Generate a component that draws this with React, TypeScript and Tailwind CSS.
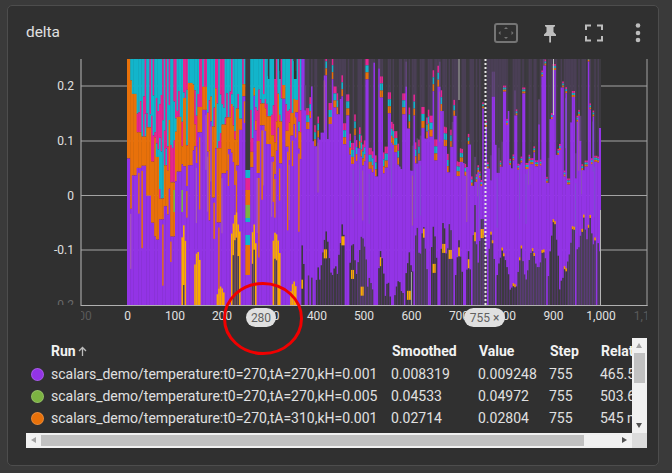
import React from "react";

const P = "#9334e6", PK = "#e52592", CY = "#12b5cb", OR = "#e8710a", YE = "#f9ab00", GR = "#7cb342", D1 = "#4a3f55", D2 = "#3c3a3f";

type R = [number, number, number, number, string];

function rng(seed: number) {
  return () => {
    seed |= 0; seed = (seed + 0x6d2b79f5) | 0;
    let t = Math.imul(seed ^ (seed >>> 15), 1 | seed);
    t = (t + Math.imul(t ^ (t >>> 7), 61 | t)) ^ t;
    return ((t ^ (t >>> 14)) >>> 0) / 4294967296;
  };
}

function lerp(pts: number[][], x: number) {
  for (let i = 1; i < pts.length; i++) {
    if (x <= pts[i][0]) {
      const [a, b] = pts[i - 1], [c, d] = pts[i];
      return b + ((d - b) * (x - a)) / (c - a);
    }
  }
  return pts[pts.length - 1][1];
}

const spikes = [[183, 222, 3], [197, 245, 3.500], [220, 285, 4], [235, 205, 5], [253, 218, 2.500], [275, 224, 4], [293, 280, 3]];

function build(): R[] {
  const r = rng(755);
  const out: R[] = [];
  const T = 59, B = 305;
  const add = (x: number, y0: number, y1: number, c: string, w = 2) => {
    const a = Math.max(T, y0), b = Math.min(B, y1);
    if (b > a) out.push([x, a, w, b - a, c]);
  };
  const dark: { c: number; top: number; hw: number; col: string; yy: number }[] = [];
  for (let c = 300; c < 602; c += 5 + r() * 7) {
    const env = lerp([[300, 235], [340, 225], [400, 250], [470, 215], [500, 245], [545, 235], [600, 215]], c);
    dark.push({ c, top: env + (r() - 0.4) * 65, hw: 2 + r() * (c > 490 ? 6 : 3.5), col: r() < 0.6 ? D1 : D2, yy: 225 + r() * 72 });
  }
  let held = 0, heldTop = 0, heldCool = 0, heldOrange = 0;
  for (let x = 127; x < 600; x += 1.6) {
    if (x >= 245 && x < 250) {
      add(x, T, 170, D2); add(x, 170, 178, CY); add(x, 178, 190, PK); add(x, 190, 205, OR);
      add(x, 205, 218, GR); add(x, 218, 222, CY); add(x, 222, 235, P); add(x, 235, 245, CY);
      add(x, 245, 275, OR); add(x, 275, B, P);
      continue;
    }
    if (x < 300) {
      if (held <= 0) {
        heldCool = lerp([[127, 80], [135, 130], [150, 170], [165, 170], [175, 125], [190, 115], [250, 118], [300, 100]], x) + (r() - 0.5) * 75;
        heldOrange = heldCool + lerp([[127, 105], [135, 90], [150, 65], [165, 55], [178, 45], [195, 50], [250, 32], [300, 20]], x) * (0.25 + r() * 1.5);
        held = 1 + Math.floor(r() * 2.500);
      }
      held--;
      const cool = heldCool, orange = heldOrange;
      let y = T;
      if (x > 255 && r() < 0.2) { add(x, T, T + r() * 25, D2); y = T + 20; }
      let lastPink = x > 140 && r() < 0.4;
      while (y < cool) {
        const h = 30 + r() * 60;
        add(x, y, Math.min(y + h, cool), lastPink ? PK : CY);
        y += h; lastPink = !lastPink;
      }
      add(x, cool, orange, OR);
      add(x, orange, B, P);
      if (r() < 0.14) add(x, orange + 5, orange + 25 + r() * 60, OR, 1.5);
      else if (r() < 0.1) add(x, orange + 5, orange + 60, "#a85bb0", 1.2);
      if (x > 150 && x < 185 && r() < 0.1) add(x, 190, 212, GR);
      for (const [c, top, hw] of spikes) {
        const d = Math.abs(x - c) / hw;
        if (d < 1) {
          const tp = top + d * (B - top) * 0.3 + r() * 6;
          add(x, tp, B, YE);
          if (d < 0.55 && c !== 183 && c !== 197) add(x, tp + 22 + d * 20, B, D1);
          else if (c === 183 && d < 0.4) add(x, 285, B, D1);
        }
      }
    } else {
      const u = Math.min(1, Math.max(0, (x - 440) / 40));
      const base = lerp([[300, 135], [350, 160], [450, 168], [490, 170], [600, 168]], x) + Math.sin(x * 0.07) * 9;
      if (held <= 0) {
        const s = r();
        heldTop = s < 0.6 ? base - Math.pow(r(), 1.2) * (base - 60) : base + (r() - 0.3) * 14;
        held = 1 + Math.floor(r() * 1.700);
      }
      held--;
      const top = heldTop;
      add(x, T, top, r() < 0.62 ? D1 : D2);
      const ch = 7 - 5 * u;
      if (r() < 0.7) {
        add(x, top - ch * 3, top - ch * 2, PK);
        add(x, top - ch * 2, top - ch, CY);
        add(x, top - ch, top, OR);
      } else if (r() < 0.5) {
        add(x, top - 25, top, "#5f4478");
      }
      if (x > 430 && top > 160 && r() < 0.1) add(x, top, top + 24, GR);
      add(x, top, B, P);
      if (r() < 0.14) add(x, top + 5, top + 55, r() < 0.5 ? "#7c4fcf" : "#a05a9a", 1.2);
      let bt = B, col = "", spike = null as null | (typeof dark)[number];
      for (const s of dark) {
        const d = Math.abs(x - s.c) / s.hw;
        if (d < 1) {
          const t = s.top + d * (B - s.top) * 0.55 + r() * 6;
          if (t < bt) { bt = t; col = s.col; spike = s; }
        }
      }
      if (spike && r() > 0.05) {
        add(x, bt, B, col);
        if (bt < 205) add(x, bt - 12, bt, PK);
        if (x < 485) {
          if (Math.abs(x - spike.c) < 1.8 && spike.yy > bt) add(x, spike.yy, spike.yy + 9, YE);
        } else if (Math.abs(x - spike.c) < 1.6) add(x, bt - 1, bt + 2, "#f29900");
      }
    }
  }
  return out;
}

const bars = build();
const xTicks: [string, number][] = [["0", 127.5], ["100", 175], ["200", 222], ["300", 269.5], ["400", 317], ["500", 364], ["600", 411.5], ["700", 459], ["800", 506], ["900", 553.5], ["1,000", 601]];
const yTicks: [string, number][] = [["0.2", 86], ["0.1", 141], ["0", 195.5], ["-0.1", 250]];

function Chart() {
  return (
    <svg width={650} height={276} viewBox="8 59 650 276" className="block">
      <defs>
        <clipPath id="yclip"><rect x={8} y={59} width={73} height={246} /></clipPath>
        <clipPath id="xclip"><rect x={81} y={305} width={566} height={30} /></clipPath>
      </defs>
      {yTicks.map(([, y]) => <line key={y} x1={81} x2={647} y1={y} y2={y} stroke="#a3a3a3" strokeWidth={1.2} />)}
      {bars.map((b, i) => <rect key={i} x={b[0]} y={b[1]} width={b[2]} height={b[3]} fill={b[4]} />)}
      <line x1={459} x2={459} y1={59} y2={100} stroke="#9e9e9e" strokeWidth={1.2} />
      <line x1={553.5} x2={553.5} y1={59} y2={115} stroke="#c4c4c4" strokeWidth={1} />
      <line x1={411.5} x2={411.5} y1={272} y2={305} stroke="#a0a0a0" strokeWidth={1} />
      <line x1={600.5} x2={600.5} y1={210} y2={305} stroke="#b5b5b5" strokeWidth={1} />
      <line x1={485.5} x2={485.5} y1={59} y2={305} stroke="#e6e6e6" strokeWidth={2} strokeDasharray="2 2" />
      <line x1={81} x2={81} y1={59} y2={306} stroke="#a3a3a3" strokeWidth={1.2} />
      <line x1={647} x2={647} y1={59} y2={306} stroke="#a3a3a3" strokeWidth={1} />
      <line x1={81} x2={647.5} y1={305.5} y2={305.5} stroke="#b0b0b0" strokeWidth={1.2} />
      <g fontFamily="Roboto, sans-serif" fontSize={12} fill="#e0e0e0">
        {yTicks.map(([t, y]) => <text key={t} x={74} y={y + 4} textAnchor="end">{t}</text>)}
        <text x={74} y={309} textAnchor="end" fill="#6a6a6a" clipPath="url(#yclip)">-0.2</text>
        {xTicks.map(([t, x]) => <text key={t} x={x} y={320} textAnchor="middle">{t}</text>)}
        <text x={80} y={320} textAnchor="middle" fill="#5a5a5a" clipPath="url(#xclip)">-100</text>
        <text x={648.500} y={320} textAnchor="middle" fill="#5a5a5a" clipPath="url(#xclip)">1,100</text>
      </g>
    </svg>
  );
}

function Icons() {
  return (
    <div className="ml-auto flex items-center gap-[20px] pr-[8px]">
      <svg width={24} height={20} viewBox="0 0 24 20">
        <rect x={1} y={1} width={22} height={18} rx={2} fill="none" stroke="#757575" strokeWidth={2} />
        <path d="M12 4l2 2h-4zM12 16l2-2h-4zM4.500 10l2-2v4zM19.500 10l-2-2v4z" fill="#757575" />
      </svg>
      <svg width={24} height={20} viewBox="0 0 24 20">
        <path d="M7 2h10v1.300l-1.500.9V9l2.500 2.500V13h-5v6.500h-1.800V13H6v-1.500L8.500 9V4.200L7 3.300z" fill="#bdbdbd" />
      </svg>
      <svg width={24} height={20} viewBox="0 0 24 20">
        <path d="M4 7V2.500h5M15 2.500h5V7M20 13v4.500h-5M9 17.500H4V13" fill="none" stroke="#bdbdbd" strokeWidth={2} />
      </svg>
      <svg width={24} height={20} viewBox="0 0 24 20">
        <circle cx={12} cy={2.500} r={2.300} fill="#bdbdbd" />
        <circle cx={12} cy={10} r={2.300} fill="#bdbdbd" />
        <circle cx={12} cy={17} r={2.300} fill="#bdbdbd" />
      </svg>
    </div>
  );
}

const rows = [
  { c: "bg-[#9334e6]", run: "scalars_demo/temperature:t0=270,tA=270,kH=0.001", s: "0.008319", v: "0.009248", rel: "465.5 ms" },
  { c: "bg-[#7cb342]", run: "scalars_demo/temperature:t0=270,tA=270,kH=0.005", s: "0.04533", v: "0.04972", rel: "503.6 ms" },
  { c: "bg-[#e8710a]", run: "scalars_demo/temperature:t0=270,tA=310,kH=0.001", s: "0.02714", v: "0.02804", rel: "545 ms" },
];

function Table() {
  return (
    <div className="mx-[18px] mt-[3px] h-[110px] w-[621px]">
      <div className="flex h-[95px]">
        <div className="h-[95px] w-[606px] overflow-hidden pt-[2px] text-[14px] whitespace-nowrap">
          <div className="flex h-[23px] items-center font-bold text-[#f2f2f2]">
            <div className="flex w-[365px] shrink-0 items-center pl-[25px]">
              Run
              <svg width={11} height={11} viewBox="0 0 11 11" className="ml-px">
                <path d="M5.500 10V2M2 5l3.500-3.500L9 5" fill="none" stroke="#bdbdbd" strokeWidth={1.300} />
              </svg>
            </div>
            <div className="w-[87px] shrink-0 pl-px">Smoothed</div>
            <div className="w-[71px] shrink-0 pl-px">Value</div>
            <div className="w-[51px] shrink-0 pl-px">Step</div>
            <div className="shrink-0 pl-px">Relative</div>
          </div>
          {rows.map((r) => (
            <div key={r.run} className="flex h-[22px] items-center text-[#e0e0e0]">
              <div className="flex w-[365px] shrink-0 items-center pl-[5px]">
                <span className={`mr-[7px] size-[13px] shrink-0 rounded-full border border-[#ffffff30] ${r.c}`} />
                {r.run}
              </div>
              <div className="w-[87px] shrink-0">{r.s}</div>
              <div className="w-[71px] shrink-0">{r.v}</div>
              <div className="w-[51px] shrink-0">755</div>
              <div className="shrink-0">{r.rel}</div>
            </div>
          ))}
        </div>
        <div className="relative h-[95px] w-[15px] bg-[#f1f1f1]">
          <div className="absolute top-[15px] left-[2px] h-[30px] w-[11px] bg-[#c1c1c1]" />
          <div className="absolute top-[5px] left-[4px] size-0 border-x-[3.500px] border-b-[5px] border-x-transparent border-b-[#a3a3a3]" />
          <div className="absolute bottom-[5px] left-[4px] size-0 border-x-[3.500px] border-t-[5px] border-x-transparent border-t-[#505050]" />
        </div>
      </div>
      <div className="flex h-[15px]">
        <div className="relative w-[606px] bg-[#f1f1f1]">
          <div className="absolute top-[2px] left-[15px] h-[11px] w-[543px] bg-[#c1c1c1]" />
          <div className="absolute top-[4px] left-[5px] size-0 border-y-[3.500px] border-r-[5px] border-y-transparent border-r-[#a3a3a3]" />
          <div className="absolute top-[4px] right-[5px] size-0 border-y-[3.500px] border-l-[5px] border-y-transparent border-l-[#505050]" />
        </div>
        <div className="w-[15px] bg-[#dcdcdc]" />
      </div>
    </div>
  );
}

export default function App() {
  return (
    <div className="h-[473px] w-[672px] overflow-hidden bg-[#3a3a3a] pt-[5px] pl-[7px] font-['Roboto',sans-serif]">
      <div className="h-[461px] w-[652px] rounded-[5px] border border-[#4d4d4d] bg-[#303030]">
        <div className="flex h-[53px] items-center pl-[18px]">
          <span className="text-[15.400px] text-[#e0e0e0]">delta</span>
          <Icons />
        </div>
        <div className="relative">
          <Chart />
          <div className="absolute top-[249px] left-[238px] flex h-[19px] w-[30px] items-center justify-center rounded-full bg-[#e0e0e0] text-[12px] text-[#616161]">280</div>
          <div className="absolute top-[249px] left-[456px] flex h-[19px] w-[41px] items-center justify-center gap-[3px] rounded-full bg-[#e0e0e0] text-[12px] text-[#616161]">755<span className="text-[12px]">×</span></div>
          <svg width={84} height={77} viewBox="0 0 84 77" className="absolute top-[221px] left-[213px]">
            <ellipse cx={42} cy={38.500} rx={38.500} ry={35} fill="none" stroke="#f00000" strokeWidth={3} />
          </svg>
        </div>
        <Table />
      </div>
    </div>
  );
}
